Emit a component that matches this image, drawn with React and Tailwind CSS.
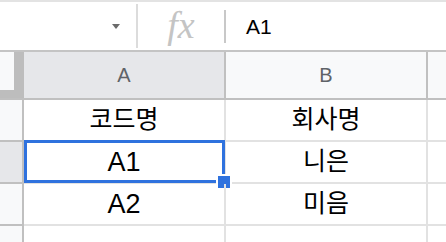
export default function App() {
  const font = { fontFamily: '"Liberation Sans", "Noto Sans CJK KR", Arial, sans-serif' };
  const rows = [
    { a: "코드명", b: "회사명" },
    { a: "A1", b: "니은", selected: true },
    { a: "A2", b: "미음" },
    { a: "", b: "" },
  ];
  const size = (t) => (/[가-힣]/.test(t) ? "text-[25px]" : "text-[27px]");

  return (
    <div className="w-[446px] h-[242px] overflow-hidden bg-white text-black" style={font}>
      {/* formula bar */}
      <div className="h-[52px] flex items-center border-t-2 border-b-2 border-t-[#e3e3e3] border-b-[#c4c4c4]">
        <div className="w-[136px] h-full flex items-center justify-end pr-[16px]">
          <div className="w-0 h-0 border-l-[4px] border-r-[4px] border-t-[5px] border-l-transparent border-r-transparent border-t-[#6b6b6b]" />
        </div>
        <div className="w-[2px] h-[44px] bg-[#dcdcdc]" />
        <div className="w-[86px] h-full flex items-center justify-center">
          <span className="text-[38px] italic text-[#c4c4c4] leading-none -mt-[2px]" style={{ fontFamily: '"Liberation Serif", "DejaVu Serif", serif' }}>
            fx
          </span>
        </div>
        <div className="w-[2px] h-[33px] bg-[#c8c8c8]" />
        <div className="pl-[20px] text-[21px] leading-none">A1</div>
      </div>

      {/* column headers */}
      <div className="h-[48px] flex border-b-2 border-[#c0c0c0]">
        <div className="w-[24px] h-full bg-[#bdbdbd]">
          <div className="w-[14px] h-[38px] bg-[#f8f9fa]" />
        </div>
        <div className="w-[202px] h-full flex items-center justify-center bg-[#e6e7ea] border-r-2 border-[#c0c0c0] text-[20px] text-[#5f6368]">
          A
        </div>
        <div className="w-[202px] h-full flex items-center justify-center bg-[#f8f9fa] border-r-2 border-[#c0c0c0] text-[20px] text-[#5f6368]">
          B
        </div>
        <div className="flex-1 h-full bg-[#f8f9fa]" />
      </div>

      {/* rows */}
      {rows.map((r, i) => (
        <div key={i} className="h-[42px] flex">
          <div
            className={
              "w-[24px] h-full border-r-2 border-b-2 border-[#c0c0c0] " +
              (r.selected ? "bg-[#e6e7ea]" : "bg-[#f8f9fa]")
            }
          />
          <div className={"relative w-[202px] h-full flex items-center justify-center border-r-2 border-b-2 border-[#e2e2e2] " + size(r.a)}>
            {r.a}
            {r.selected && (
              <>
                <div className="absolute left-0 -top-[2px] w-[201px] h-[43px] border-[3px] border-[#2f72de]" />
                <div className="absolute left-[192px] top-[32px] w-[16px] h-[16px] bg-[#2f72de] border-2 border-white" />
              </>
            )}
          </div>
          <div className={"w-[202px] h-full flex items-center justify-center border-r-2 border-b-2 border-[#e2e2e2] " + size(r.b)}>
            {r.b}
          </div>
          <div className="flex-1 h-full border-b-2 border-[#e2e2e2]" />
        </div>
      ))}
    </div>
  );
}
